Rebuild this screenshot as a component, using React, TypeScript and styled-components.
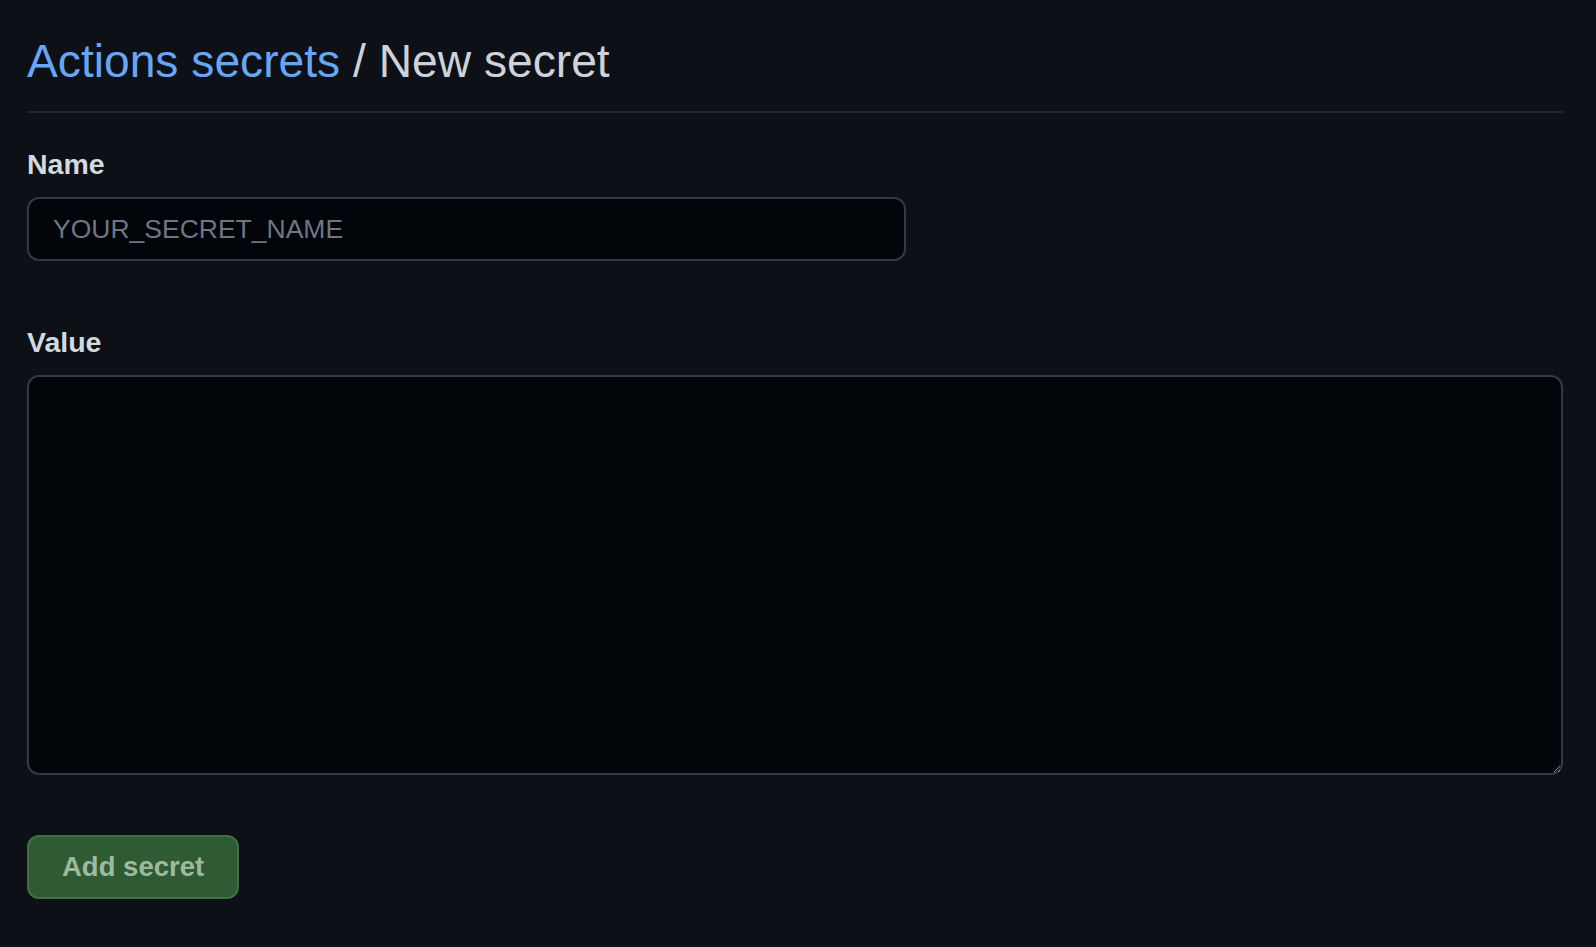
import styled, { createGlobalStyle } from 'styled-components';

const GlobalStyle = createGlobalStyle`
  html, body {
    margin: 0;
    padding: 0;
    background: #0d1117;
  }
  body {
    font-family: "Liberation Sans", Arial, sans-serif;
    color: #c9d1d9;
  }
`;

const Page = styled.div`
  min-height: 947px;
  padding: 32px 33px 0 27px;
  box-sizing: border-box;
  background: #0d1117;
`;

const Subhead = styled.div`
  padding-bottom: 21px;
  border-bottom: 2px solid #21262d;
`;

const Heading = styled.h2`
  margin: 0;
  font-size: 46.2px;
  font-weight: 400;
  line-height: 58px;
  color: #cdd3d9;
`;

const HeadingLink = styled.a`
  color: #66a6f7;
  text-decoration: none;
`;

const Form = styled.form`
  display: flex;
  flex-direction: column;
  padding-top: 31px;
`;

const FormGroup = styled.div<{ spaced?: boolean }>`
  display: flex;
  flex-direction: column;
  gap: 13px;
  margin-bottom: ${({ spaced }) => (spaced ? '61px' : '0')};
`;

const Label = styled.label`
  font-size: 28.5px;
  font-weight: 700;
  line-height: 40px;
  color: #d3d9df;
`;

const TextInput = styled.input`
  box-sizing: border-box;
  width: 879px;
  height: 64px;
  padding: 0 24px;
  border: 2px solid #353a42;
  border-radius: 12px;
  background: #010409;
  color: #c9d1d9;
  font-family: "Liberation Sans", Arial, sans-serif;
  font-size: 26.5px;
  outline: none;

  &::placeholder {
    color: #6e7681;
  }
`;

const TextArea = styled.textarea`
  box-sizing: border-box;
  width: 100%;
  height: 400px;
  padding: 16px 24px;
  border: 2px solid #353a42;
  border-radius: 12px;
  background: #010409;
  color: #c9d1d9;
  font-family: "Liberation Mono", monospace;
  font-size: 26px;
  outline: none;
  resize: vertical;
`;

const Actions = styled.div`
  display: flex;
  margin-top: 60px;
`;

const PrimaryButton = styled.button`
  box-sizing: border-box;
  height: 64px;
  padding: 0 33px;
  border: 2px solid #416e44;
  border-radius: 12px;
  background: #2e5b31;
  color: #9fb9a1;
  font-family: "Liberation Sans", Arial, sans-serif;
  font-size: 27.5px;
  font-weight: 700;
  cursor: not-allowed;
`;

export default function App() {
  return (
    <>
      <GlobalStyle />
      <Page>
        <Subhead>
          <Heading>
            <HeadingLink href="#">Actions secrets</HeadingLink> / New secret
          </Heading>
        </Subhead>
        <Form onSubmit={(e) => e.preventDefault()}>
          <FormGroup spaced>
            <Label htmlFor="secret_name">Name</Label>
            <TextInput id="secret_name" placeholder="YOUR_SECRET_NAME" />
          </FormGroup>
          <FormGroup>
            <Label htmlFor="secret_value">Value</Label>
            <TextArea id="secret_value" />
          </FormGroup>
          <Actions>
            <PrimaryButton type="submit" disabled>
              Add secret
            </PrimaryButton>
          </Actions>
        </Form>
      </Page>
    </>
  );
}
